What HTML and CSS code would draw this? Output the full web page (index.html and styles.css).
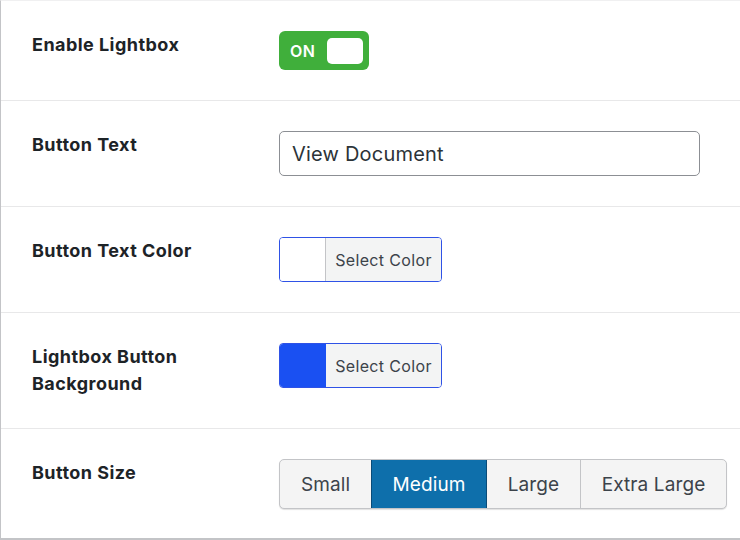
FILE: index.html
```html
<!DOCTYPE html>
<html>
<head>
<meta charset="utf-8">
<link rel="stylesheet" href="styles.css">
</head>
<body>
<div class="table">
  <div class="row">
    <div class="label">Enable Lightbox</div>
    <div class="field">
      <div class="toggle"><span class="toggle-text">ON</span><span class="knob"></span></div>
    </div>
  </div>
  <div class="row">
    <div class="label">Button Text</div>
    <div class="field">
      <div class="input">View Document</div>
    </div>
  </div>
  <div class="row">
    <div class="label">Button Text Color</div>
    <div class="field">
      <div class="color-btn"><span class="swatch swatch-white"></span><span class="color-text">Select Color</span></div>
    </div>
  </div>
  <div class="row row-tall">
    <div class="label">Lightbox Button<br>Background</div>
    <div class="field">
      <div class="color-btn"><span class="swatch swatch-blue"></span><span class="color-text">Select Color</span></div>
    </div>
  </div>
  <div class="row">
    <div class="label">Button Size</div>
    <div class="field">
      <div class="group">
        <span class="gbtn g-small">Small</span>
        <span class="gbtn g-medium active">Medium</span>
        <span class="gbtn g-large">Large</span>
        <span class="gbtn g-xl">Extra Large</span>
      </div>
    </div>
  </div>
</div>
</body>
</html>
```

FILE: styles.css
```css
html, body {
  margin: 0;
  padding: 0;
  background: #fff;
  font-family: Inter, "Noto Sans", sans-serif;
  color: #1d2327;
}
* { box-sizing: border-box; }
.table {
  width: 740px;
  height: 540px;
  border-left: 1px solid #c3c4c7;
  border-top: 1px solid #f0f0f1;
  border-bottom: 2px solid #c3c4c7;
  overflow: hidden;
}
.row {
  display: grid;
  grid-template-columns: 278px 1fr;
  border-bottom: 1px solid #e8e8e9;
}
.row:last-child {
  border-bottom: none;
}
.row-tall .label {
  padding-bottom: 31px;
}
.label {
  padding: 30px 0 30px 31px;
  font-size: 18px;
  line-height: 27px;
  font-weight: 700;
  letter-spacing: 0.45px;
  color: #1d2327;
}
.field {
  padding: 30px 0;
}
.toggle {
  width: 90px;
  height: 39px;
  border-radius: 6px;
  background: #40af3b;
  display: flex;
  align-items: center;
  justify-content: space-between;
  padding: 0 6px 0 11px;
}
.toggle-text {
  color: #fff;
  font-weight: 600;
  font-size: 16px;
  letter-spacing: 0.5px;
}
.knob {
  width: 36px;
  height: 26px;
  background: #fff;
  border-radius: 5px;
}
.input {
  width: 421px;
  height: 45px;
  border: 1px solid #8c8f94;
  border-radius: 5px;
  padding: 0 12px;
  display: flex;
  align-items: center;
  font-size: 20px;
  letter-spacing: 0.2px;
  color: #2c3338;
}
.color-btn {
  display: flex;
  width: 163px;
  height: 45px;
  border: 1px solid #2f52e6;
  border-radius: 4px;
  overflow: hidden;
}
.swatch {
  width: 46px;
  border-right: 1px solid #c3c4c7;
  flex: none;
}
.swatch-white { background: #fff; }
.swatch-blue { background: #1a50f2; border-right-color: #1a50f2; }
.color-text {
  flex: 1;
  background: #f3f4f4;
  display: flex;
  align-items: center;
  justify-content: center;
  font-size: 16px;
  letter-spacing: 0.35px;
  color: #3c434a;
}
.group {
  display: flex;
  width: 448px;
  height: 50px;
  border: 1px solid #c3c4c7;
  border-radius: 5px;
  box-shadow: 0 1px 1px rgba(0,0,0,0.12);
  overflow: hidden;
  background: #f4f4f4;
}
.gbtn {
  display: flex;
  align-items: center;
  justify-content: center;
  font-size: 19px;
  letter-spacing: 0.1px;
  color: #3c434a;
  border-left: 1px solid #c3c4c7;
}
.g-small { width: 91px; border-left: none; }
.g-medium { width: 116px; }
.g-large { width: 93px; }
.g-xl { flex: 1; }
.gbtn.active {
  background: #0e6fab;
  color: #fff;
  border-left-color: #0a4b78;
  border-right: 1px solid #0a4b78;
}
.gbtn.active + .gbtn { border-left: none; }
```
